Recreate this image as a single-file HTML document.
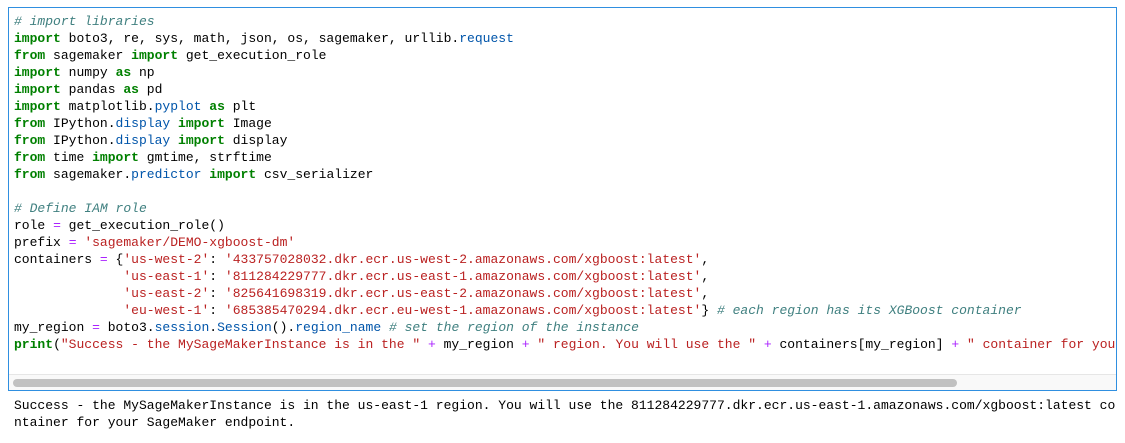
<!DOCTYPE html>
<html><head><style>
body{margin:0;background:#fff;width:1125px;height:443px;overflow:hidden;font-family:"Liberation Mono",monospace;font-size:13.03px;}
.cell{position:absolute;left:8px;top:7px;width:1107px;height:382px;border:1px solid #2f8fe0;overflow:hidden;}
pre{margin:0;font:inherit;line-height:17px;color:#000;position:absolute;left:5px;top:5px;white-space:pre;}
.c{color:#408080;font-style:italic}.k{color:#008000;font-weight:bold}.n{color:#0055aa}.s{color:#ba2121}.o{color:#aa22ff}
.track{position:absolute;left:0;right:0;top:366px;height:16px;background:#f9f9f9;border-top:1px solid #e6e6e6}
.thumb{position:absolute;left:4px;top:4px;width:944px;height:8px;border-radius:4px;background:#c1c1c1}
.out{position:absolute;left:14px;top:397px;margin:0;font:inherit;line-height:17px;white-space:pre;color:#000}
</style></head><body>
<div class="cell"><pre><span class="c"># import libraries</span>
<span class="k">import</span> boto3, re, sys, math, json, os, sagemaker, urllib.<span class="n">request</span>
<span class="k">from</span> sagemaker <span class="k">import</span> get_execution_role
<span class="k">import</span> numpy <span class="k">as</span> np
<span class="k">import</span> pandas <span class="k">as</span> pd
<span class="k">import</span> matplotlib.<span class="n">pyplot</span> <span class="k">as</span> plt
<span class="k">from</span> IPython.<span class="n">display</span> <span class="k">import</span> Image
<span class="k">from</span> IPython.<span class="n">display</span> <span class="k">import</span> display
<span class="k">from</span> time <span class="k">import</span> gmtime, strftime
<span class="k">from</span> sagemaker.<span class="n">predictor</span> <span class="k">import</span> csv_serializer

<span class="c"># Define IAM role</span>
role <span class="o">=</span> get_execution_role()
prefix <span class="o">=</span> <span class="s">'sagemaker/DEMO-xgboost-dm'</span>
containers <span class="o">=</span> {<span class="s">'us-west-2'</span>: <span class="s">'433757028032.dkr.ecr.us-west-2.amazonaws.com/xgboost:latest'</span>,
              <span class="s">'us-east-1'</span>: <span class="s">'811284229777.dkr.ecr.us-east-1.amazonaws.com/xgboost:latest'</span>,
              <span class="s">'us-east-2'</span>: <span class="s">'825641698319.dkr.ecr.us-east-2.amazonaws.com/xgboost:latest'</span>,
              <span class="s">'eu-west-1'</span>: <span class="s">'685385470294.dkr.ecr.eu-west-1.amazonaws.com/xgboost:latest'</span>} <span class="c"># each region has its XGBoost container</span>
my_region <span class="o">=</span> boto3.<span class="n">session</span>.<span class="n">Session</span>().<span class="n">region_name</span> <span class="c"># set the region of the instance</span>
<span class="k">print</span>(<span class="s">"Success - the MySageMakerInstance is in the "</span> <span class="o">+</span> my_region <span class="o">+</span> <span class="s">" region. You will use the "</span> <span class="o">+</span> containers[my_region] <span class="o">+</span> <span class="s">" container for your SageMaker endpoint."</span>)</pre>
<div class="track"><div class="thumb"></div></div></div>
<pre class="out">Success - the MySageMakerInstance is in the us-east-1 region. You will use the 811284229777.dkr.ecr.us-east-1.amazonaws.com/xgboost:latest co
ntainer for your SageMaker endpoint.</pre>
</body></html>
